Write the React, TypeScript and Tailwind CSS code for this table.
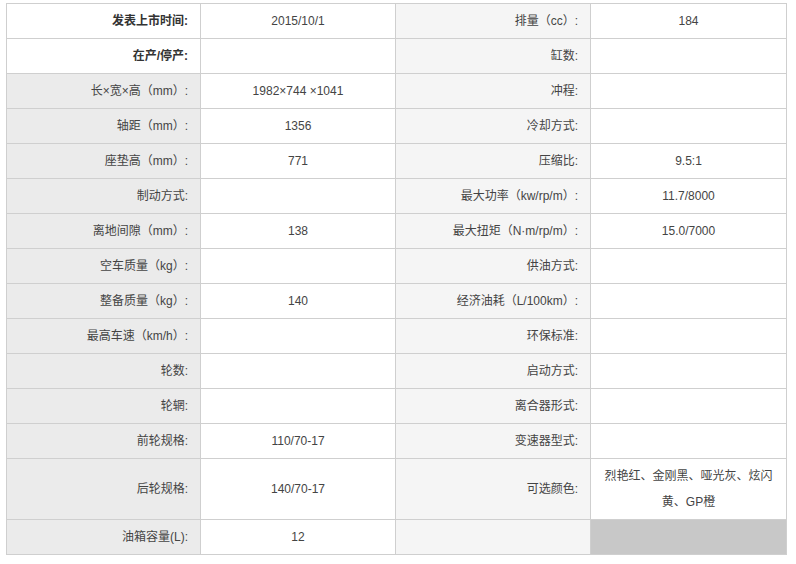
type Row = {
    l1: string;
    v1: string;
    l2: string;
    v2: string;
    bold?: boolean;
    tall?: boolean;
    last?: boolean;
};

const rows: Row[] = [
    { l1: "发表上市时间:", v1: "2015/10/1", l2: "排量（cc）:", v2: "184", bold: true },
    { l1: "在产/停产:", v1: "", l2: "缸数:", v2: "", bold: true },
    { l1: "长×宽×高（mm）:", v1: "1982×744 ×1041", l2: "冲程:", v2: "" },
    { l1: "轴距（mm）:", v1: "1356", l2: "冷却方式:", v2: "" },
    { l1: "座垫高（mm）:", v1: "771", l2: "压缩比:", v2: "9.5:1" },
    { l1: "制动方式:", v1: "", l2: "最大功率（kw/rp/m）:", v2: "11.7/8000" },
    { l1: "离地间隙（mm）:", v1: "138", l2: "最大扭矩（N·m/rp/m）:", v2: "15.0/7000" },
    { l1: "空车质量（kg）:", v1: "", l2: "供油方式:", v2: "" },
    { l1: "整备质量（kg）:", v1: "140", l2: "经济油耗（L/100km）:", v2: "" },
    { l1: "最高车速（km/h）:", v1: "", l2: "环保标准:", v2: "" },
    { l1: "轮数:", v1: "", l2: "启动方式:", v2: "" },
    { l1: "轮辋:", v1: "", l2: "离合器形式:", v2: "" },
    { l1: "前轮规格:", v1: "110/70-17", l2: "变速器型式:", v2: "" },
    { l1: "后轮规格:", v1: "140/70-17", l2: "可选颜色:", v2: "烈艳红、金刚黑、哑光灰、炫闪黄、GP橙", tall: true },
    { l1: "油箱容量(L):", v1: "12", l2: "", v2: "", last: true },
];

export default function App() {
    return (
        <div
            className="min-h-[564px] w-[796px] bg-white pl-[6px] pt-[3px] text-[12px] text-[#444]"
            style={{ fontFamily: '"Liberation Sans", "Noto Sans CJK SC", sans-serif' }}
        >
            <table className="w-[780px] table-fixed border-collapse">
                <colgroup>
                    <col className="w-[194px]" />
                    <col className="w-[195px]" />
                    <col className="w-[195px]" />
                    <col className="w-[196px]" />
                </colgroup>
                <tbody>
                    {rows.map((r, i) => (
                        <tr key={i} className={r.tall ? "h-[61px]" : "h-[35px]"}>
                            <td
                                className={`border border-[#cfcfcf] pr-[12px] text-right leading-[26px] ${
                                    r.bold ? "bg-white font-bold text-[#333]" : "bg-[#ebebeb]"
                                }`}
                            >
                                {r.l1}
                            </td>
                            <td className="border border-[#cfcfcf] bg-white px-[10px] text-center leading-[26px]">
                                {r.v1}
                            </td>
                            <td className="border border-[#cfcfcf] bg-[#f5f5f5] pr-[12px] text-right leading-[26px]">
                                {r.l2}
                            </td>
                            <td
                                className={`border border-[#cfcfcf] px-[10px] text-center leading-[26px] ${
                                    r.last ? "bg-[#c8c8c8]" : "bg-white"
                                }`}
                            >
                                {r.v2}
                            </td>
                        </tr>
                    ))}
                </tbody>
            </table>
        </div>
    );
}
